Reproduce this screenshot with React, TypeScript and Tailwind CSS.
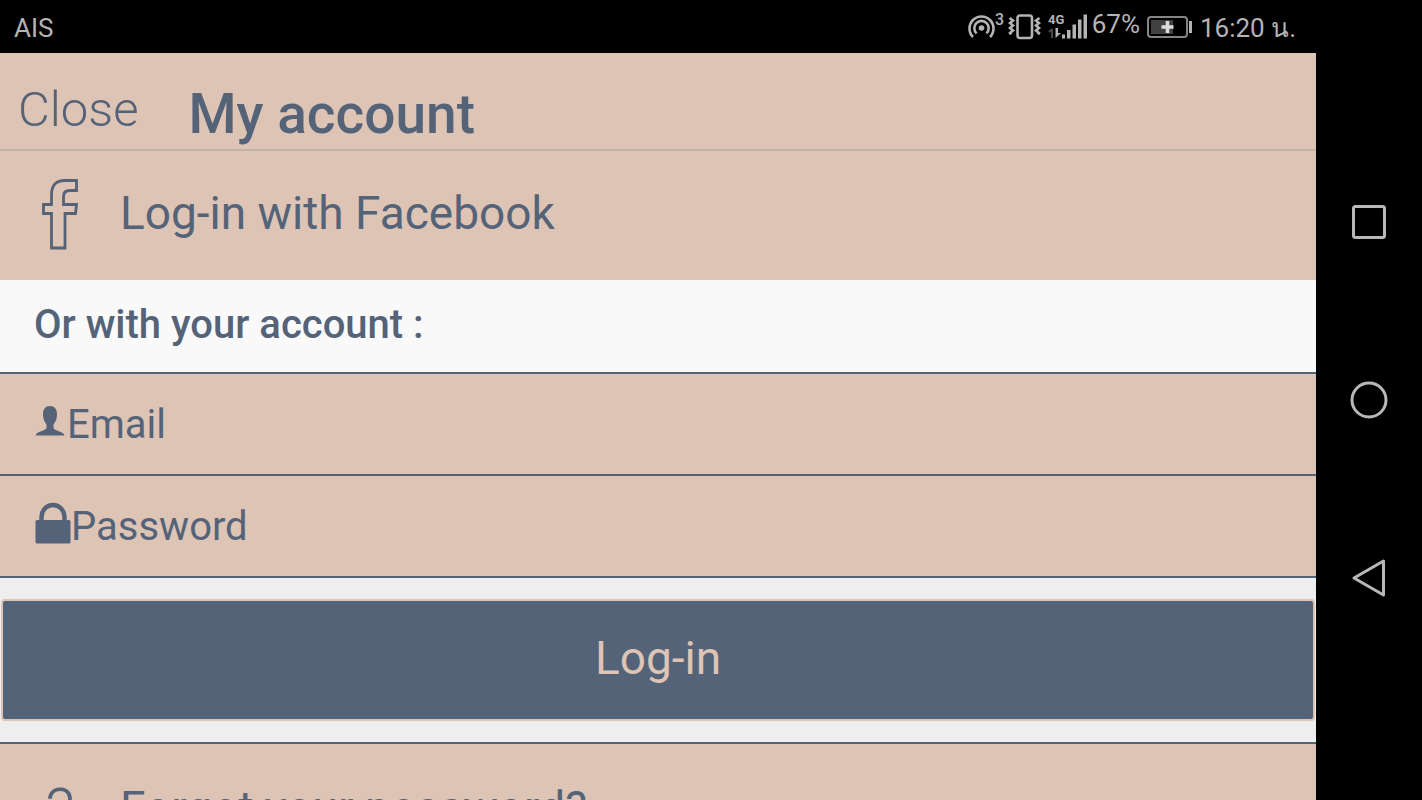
import type { ReactNode } from "react";

function StatusBar() {
  return (
    <header className="flex h-[53px] shrink-0 items-center justify-between bg-black pr-5 pl-3.5 text-[26px] leading-8 text-[#b4b4b4]">
      <span className="pt-0.5">AIS</span>
      <div className="flex items-center">
        <svg viewBox="0 0 38 28" className="mb-0.5 h-7 w-[38px]" fill="none" stroke="#b4b4b4" strokeWidth="2.6">
          <path d="M5 25A12 12 0 1 1 22 25" />
          <path d="M8.600 21.400A7.200 7.200 0 1 1 18.400 21.400" />
          <circle cx="13.500" cy="16" r="2.800" fill="#b4b4b4" stroke="none" />
          <text x="27" y="13" fill="#b4b4b4" stroke="none" fontSize="16" fontWeight="500">
            3
          </text>
        </svg>
        <svg viewBox="0 0 34 28" className="mb-0.5 ml-0.5 h-7 w-[34px]" fill="none" stroke="#b4b4b4">
          <rect x="9.500" y="3.500" width="14.500" height="22.500" rx="2.500" strokeWidth="2.600" />
          <path d="M1.500 6l3.500 2.500-3 2.500 3 2.500-3 2.500 3 2.500-3 2.500 1 1.500" strokeWidth="2.600" />
          <path d="M31.500 6l-3.500 2.500 3 2.500-3 2.500 3 2.500-3 2.500 3 2.500-1 1.500" strokeWidth="2.600" />
        </svg>
        <svg viewBox="0 0 40 28" className="mb-0.5 ml-1.5 h-7 w-10" fill="#b4b4b4">
          <text x="0" y="12" fontSize="13" fontWeight="700">
            4G
          </text>
          <path d="M4 17v9M1 20l3-3" stroke="#484848" strokeWidth="2" fill="none" />
          <path d="M7.500 16v10l5.500-5h-3v-5z" />
          <rect x="14" y="22.500" width="3" height="4" />
          <rect x="19" y="18" width="3.500" height="8.500" />
          <rect x="24.500" y="12.500" width="3.500" height="14" />
          <rect x="30" y="7.500" width="3.500" height="19" />
          <rect x="35.500" y="2.500" width="3.500" height="24" />
        </svg>
        <span className="ml-1 pb-1.5">67%</span>
        <svg viewBox="0 0 46 24" className="ml-1.5 h-6 w-[46px]" fill="none">
          <rect x="2" y="2" width="39" height="20" rx="3" stroke="#858585" strokeWidth="2" />
          <rect x="5" y="5" width="22" height="14" fill="#414141" />
          <path d="M21.500 6v12M15.500 12h12" stroke="#dcdcdc" strokeWidth="3.600" />
          <path d="M44.500 6v12" stroke="#b4b4b4" strokeWidth="3" />
        </svg>
        <span className="ml-2 pt-0.5">16:20 น.</span>
      </div>
    </header>
  );
}

function FacebookIcon() {
  return (
    <svg viewBox="0 0 36 72" className="h-[72px] w-9" fill="none" stroke="#556379" strokeWidth="2.800">
      <path d="M9.500 70V35.500H1.500V26.500H9.500V17C9.500 7 14 2.500 23 2.500H34.500V12.500H28C23 12.500 21.500 15 21.500 18.500V26.500H34.500L33.500 35.500H23V70Z" />
    </svg>
  );
}

function PersonIcon() {
  return (
    <svg viewBox="0 0 30 32" className="mr-0.5 mb-1.5 h-8 w-[30px] shrink-0" fill="#556379">
      <path d="M15 1C10.500 1 8 4 8 9c0 5 1.500 8 3.500 10.500v3.500C11 26 1.500 26 .5 30.500h29c-1-4.500-10.500-4.500-11-7.500v-3.500C20.500 17 22 14 22 9c0-5-2.500-8-7-8z" />
    </svg>
  );
}

function LockIcon() {
  return (
    <svg viewBox="0 0 36 42" className="mb-1.5 h-[42px] w-9 shrink-0" fill="#556379">
      <rect x="0.500" y="18" width="35" height="23.500" rx="1.500" />
      <path d="M6.500 19v-4a11.500 12 0 0 1 23 0v4" fill="none" stroke="#556379" strokeWidth="4.500" />
    </svg>
  );
}

type FieldProps = {
  icon: ReactNode;
  label: string;
  type: string;
};

function Field({ icon, label, type }: FieldProps) {
  return (
    <label className="flex h-[102px] items-center border-t-2 border-[#556379] bg-[#ddc4b5] pl-[35px]">
      {icon}
      <input
        type={type}
        placeholder={label}
        aria-label={label}
        className="h-12 min-w-0 flex-1 bg-transparent pt-0.5 text-[40px] text-[#556379] outline-none placeholder:text-[#556379]"
      />
    </label>
  );
}

function NavigationBar() {
  return (
    <nav className="flex w-[106px] shrink-0 flex-col items-center justify-center gap-[138px] bg-black">
      <button type="button" aria-label="Recent apps">
        <svg viewBox="0 0 40 40" className="size-10" fill="none" stroke="#b8b8b8" strokeWidth="3">
          <rect x="4.500" y="4.500" width="31" height="31" rx="2" />
        </svg>
      </button>
      <button type="button" aria-label="Home">
        <svg viewBox="0 0 40 40" className="size-10" fill="none" stroke="#b8b8b8" strokeWidth="3">
          <circle cx="20" cy="20" r="17" />
        </svg>
      </button>
      <button type="button" aria-label="Back">
        <svg viewBox="0 0 40 40" className="size-10" fill="none" stroke="#b8b8b8" strokeWidth="3" strokeLinejoin="round">
          <path d="M34.500 3v34L5 20z" />
        </svg>
      </button>
    </nav>
  );
}

export default function App() {
  return (
    <div className="flex h-screen overflow-hidden bg-black font-[Roboto,'Noto_Sans',sans-serif]">
      <div className="flex min-w-0 flex-1 flex-col overflow-hidden">
        <StatusBar />
        <main className="min-h-0 flex-1 overflow-hidden bg-[#eeeeee] text-[#556379]">
          <div className="flex h-[98px] items-center border-b-2 border-[#c1b2a6] bg-[#ddc4b5] pl-[18px]">
            <button type="button" className="pt-[18px] text-[49px] leading-[60px] font-light">
              Close
            </button>
            <h1 className="ml-[50px] pt-[26px] text-[55px] leading-[64px] font-medium">My account</h1>
          </div>
          <button type="button" className="flex h-[129px] w-full items-center bg-[#ddc4b5] pb-1 pl-[42px] text-left text-[46px]">
            <FacebookIcon />
            <span className="ml-[42px]">Log-in with Facebook</span>
          </button>
          <h2 className="h-[92px] bg-[#f9f9f9] pl-[34px] text-[40px] leading-[90px] font-medium">
            Or with your account :
          </h2>
          <form onSubmit={(e) => e.preventDefault()}>
            <Field icon={<PersonIcon />} label="Email" type="email" />
            <Field icon={<LockIcon />} label="Password" type="password" />
            <div className="border-y-2 border-[#556379] px-px py-[21px]">
              <button
                type="submit"
                className="h-[122px] w-full rounded-sm border-2 border-[#ddc4b5] bg-[#556379] pb-1 text-[46px] text-[#ddc4b5]"
              >
                Log-in
              </button>
            </div>
          </form>
          <a href="#forgot" className="flex h-[129px] items-center bg-[#ddc4b5] pl-[42px] text-[46px]">
            <span className="w-9 pt-2 text-center text-[64px] font-light">?</span>
            <span className="ml-[42px]">Forgot your password?</span>
          </a>
        </main>
      </div>
      <NavigationBar />
    </div>
  );
}
